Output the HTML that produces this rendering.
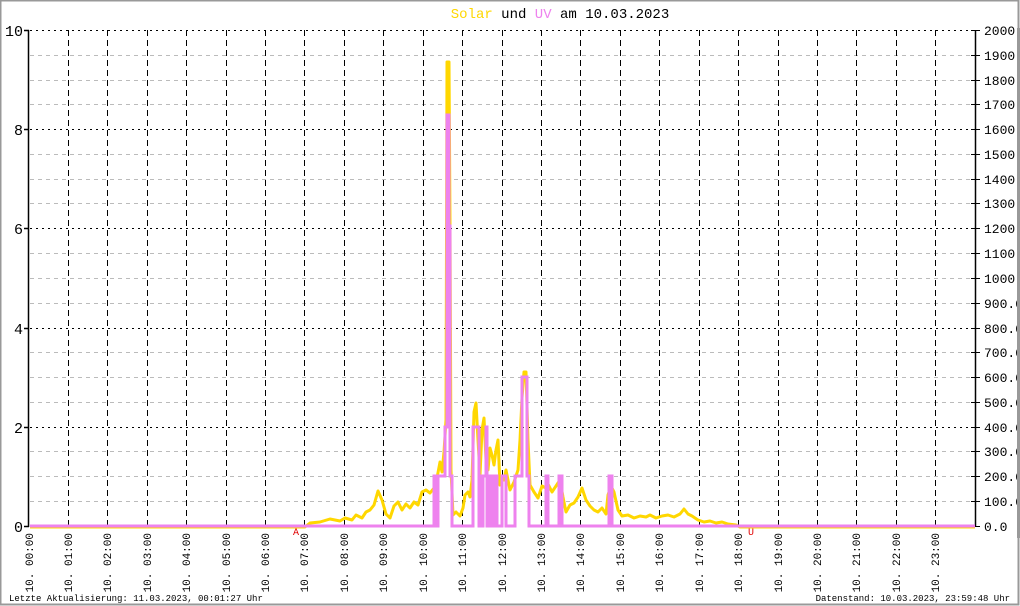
<!DOCTYPE html>
<html><head><meta charset="utf-8"><style>
html,body{margin:0;padding:0;background:#fff;width:1020px;height:606px;overflow:hidden}
svg{display:block}
text{font-family:"Liberation Mono",monospace}
</style></head><body>
<svg width="1020" height="606" viewBox="0 0 1020 606" xmlns="http://www.w3.org/2000/svg">
<rect x="0.5" y="0.5" width="1018" height="604" fill="#fff" stroke="#999" stroke-width="2"/>
<text x="560" y="18" font-size="14" text-anchor="middle"><tspan fill="#FFD700">Solar</tspan><tspan fill="#000"> und </tspan><tspan fill="#EE82EE">UV</tspan><tspan fill="#000"> am 10.03.2023</tspan></text>
<g stroke="#bbb" stroke-width="1" stroke-dasharray="4,4">
<path d="M30 55.5H975M30 80.5H975M30 104.5H975M30 154.5H975M30 179.5H975M30 203.5H975M30 253.5H975M30 278.5H975M30 303.5H975M30 352.5H975M30 377.5H975M30 402.5H975M30 451.5H975M30 476.5H975M30 501.5H975"/>
</g>
<g stroke="#000" stroke-width="1" stroke-dasharray="2,4">
<path d="M30 30.5H975M30 129.5H975M30 228.5H975M30 328.5H975M30 427.5H975"/>
</g>
<g stroke="#000" stroke-width="1" stroke-dasharray="6,4">
<path d="M68.5 30V526M107.5 30V526M147.5 30V526M186.5 30V526M226.5 30V526M265.5 30V526M304.5 30V526M344.5 30V526M383.5 30V526M423.5 30V526M462.5 30V526M502.5 30V526M541.5 30V526M580.5 30V526M620.5 30V526M659.5 30V526M699.5 30V526M738.5 30V526M778.5 30V526M817.5 30V526M856.5 30V526M896.5 30V526M935.5 30V526"/>
</g>
<path d="M28.5 30V527M975.5 30V527M24 30.5H29M24 129.5H29M24 228.5H29M24 328.5H29M24 427.5H29M24 526.5H29" stroke="#000" stroke-width="1.5" fill="none"/>
<path d="M971 30.5h9M971 55.5h9M971 80.5h9M971 104.5h9M971 129.5h9M971 154.5h9M971 179.5h9M971 203.5h9M971 228.5h9M971 253.5h9M971 278.5h9M971 303.5h9M971 328.5h9M971 352.5h9M971 377.5h9M971 402.5h9M971 427.5h9M971 451.5h9M971 476.5h9M971 501.5h9M971 526.5h9" stroke="#000" stroke-width="1"/>
<g font-size="15" text-anchor="end" fill="#000">
<text x="23" y="36">10</text><text x="23" y="135">8</text><text x="23" y="234">6</text><text x="23" y="334">4</text><text x="23" y="433">2</text><text x="23" y="532">0</text>
</g>
<g font-size="13" fill="#000">
<text x="984" y="35">2000</text><text x="984" y="60">1900</text><text x="984" y="85">1800</text><text x="984" y="109">1700</text><text x="984" y="134">1600</text><text x="984" y="159">1500</text><text x="984" y="184">1400</text><text x="984" y="208">1300</text><text x="984" y="233">1200</text><text x="984" y="258">1100</text><text x="984" y="283">1000</text><text x="984" y="308">900.0</text><text x="984" y="333">800.0</text><text x="984" y="357">700.0</text><text x="984" y="382">600.0</text><text x="984" y="407">500.0</text><text x="984" y="432">400.0</text><text x="984" y="456">300.0</text><text x="984" y="481">200.0</text><text x="984" y="506">100.0</text><text x="984" y="531">0.0</text>
</g>
<rect x="1017" y="28" width="3" height="510" fill="#999"/>
<!-- solar -->
<polyline fill="none" stroke="#FFD700" stroke-width="3" stroke-linejoin="round" points="30,527 305,527 310,523 320,522 330,519 340,521 345,518 352,520 356,515 362,518 366,512 370,510 374,505 378,491 382,500 386,514 390,518 394,506 398,502 402,510 406,504 410,508 414,502 418,505 422,492 426,490 430,493 434,488 437,478 440,462 442,472 444,452 446,420 447,62 449,62 450,220 451,470 453,515 456,512 460,516 463,508 465,495 468,492 470,497 472,480 474,412 476,403 478,440 480,475 482,430 484,418 486,460 488,470 490,448 492,455 494,465 496,450 498,440 500,485 502,478 504,480 506,470 510,490 514,482 518,470 520,440 522,398 524,372 526,372 528,440 530,485 534,492 538,498 542,486 546,488 548,484 552,492 556,486 560,480 563,497 566,512 570,505 574,503 578,497 582,488 586,500 590,506 594,510 598,512 602,508 606,514 608,495 611,486 614,492 618,510 622,516 628,515 634,518 640,516 646,517 650,515 656,518 662,516 668,515 674,517 680,514 684,509 688,514 692,516 698,520 704,522 710,521 716,523 722,522 728,524 736,525 740,527 975,527"/>
<!-- UV -->
<polyline fill="none" stroke="#EE82EE" stroke-width="3" stroke-linejoin="miter" points="30,526 434,526 434,476 437,476 437,526 438,526 438,476 445,476 445,427 447,427 447,115 449,115 449,226 450,226 450,476 452,476 452,526 473,526 473,427 479,427 479,526 480,526 480,476 482,476 482,526 483,526 483,476 486,476 486,427 487,427 487,526 489,526 489,476 491,476 491,526 492,526 492,476 494,476 494,526 495,526 495,476 497,476 497,526 502,526 502,476 506,476 506,526 515,526 515,476 522,476 522,377 527,377 527,476 529,476 529,526 546,526 546,476 548,476 548,526 559,526 559,476 562,476 562,526 609,526 609,476 612,476 612,526 975,526"/>
<text x="296" y="535" font-size="10" fill="#e00000" text-anchor="middle">A</text>
<text x="751" y="535" font-size="10" fill="#e00000" text-anchor="middle">U</text>
<g font-size="11" fill="#000" text-anchor="end">
<text transform="translate(33,533) rotate(-90)">10. 00:00</text>
<text transform="translate(72,533) rotate(-90)">10. 01:00</text>
<text transform="translate(111,533) rotate(-90)">10. 02:00</text>
<text transform="translate(151,533) rotate(-90)">10. 03:00</text>
<text transform="translate(190,533) rotate(-90)">10. 04:00</text>
<text transform="translate(230,533) rotate(-90)">10. 05:00</text>
<text transform="translate(269,533) rotate(-90)">10. 06:00</text>
<text transform="translate(308,533) rotate(-90)">10. 07:00</text>
<text transform="translate(348,533) rotate(-90)">10. 08:00</text>
<text transform="translate(387,533) rotate(-90)">10. 09:00</text>
<text transform="translate(427,533) rotate(-90)">10. 10:00</text>
<text transform="translate(466,533) rotate(-90)">10. 11:00</text>
<text transform="translate(506,533) rotate(-90)">10. 12:00</text>
<text transform="translate(545,533) rotate(-90)">10. 13:00</text>
<text transform="translate(584,533) rotate(-90)">10. 14:00</text>
<text transform="translate(624,533) rotate(-90)">10. 15:00</text>
<text transform="translate(663,533) rotate(-90)">10. 16:00</text>
<text transform="translate(703,533) rotate(-90)">10. 17:00</text>
<text transform="translate(742,533) rotate(-90)">10. 18:00</text>
<text transform="translate(782,533) rotate(-90)">10. 19:00</text>
<text transform="translate(821,533) rotate(-90)">10. 20:00</text>
<text transform="translate(860,533) rotate(-90)">10. 21:00</text>
<text transform="translate(900,533) rotate(-90)">10. 22:00</text>
<text transform="translate(939,533) rotate(-90)">10. 23:00</text>
</g>
<text x="9" y="601" font-size="9" fill="#000">Letzte Aktualisierung: 11.03.2023, 00:01:27 Uhr</text>
<text x="1010" y="601" font-size="9" fill="#000" text-anchor="end">Datenstand: 10.03.2023, 23:59:48 Uhr</text>
</svg>
</body></html>
